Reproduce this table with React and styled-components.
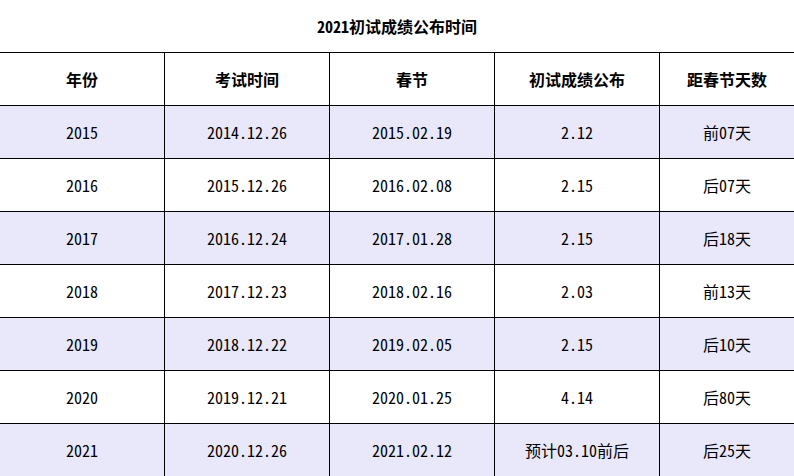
import React from 'react';
import styled, { createGlobalStyle } from 'styled-components';

const GlobalStyle = createGlobalStyle`
    html, body {
        margin: 0;
        padding: 0;
        background: #fff;
    }
    body {
        font-family: "Noto Sans Mono CJK SC", "Noto Sans CJK SC", "Liberation Mono", monospace;
        color: #000;
    }
`;

const Page = styled.div`
    width: 794px;
    height: 476px;
    overflow: hidden;
`;

const Title = styled.h2`
    margin: 0;
    height: 52px;
    display: flex;
    align-items: center;
    justify-content: center;
    font-size: 16px;
    font-weight: bold;
`;

const Row = styled.div`
    display: grid;
    grid-template-columns: 164px 165px 165px 165px 1fr;
    height: 53px;
    box-sizing: border-box;
    border-top: 1px solid #000;
    background: ${({ shaded }) => (shaded ? '#e8e8fa' : '#fff')};
`;

const Cell = styled.div`
    display: flex;
    align-items: center;
    justify-content: center;
    font-size: 16px;
    font-weight: ${({ head }) => (head ? 'bold' : 'normal')};
    border-left: 1px solid #000;
    box-sizing: border-box;

    &:first-child {
        border-left: none;
    }
`;

const headers = ['年份', '考试时间', '春节', '初试成绩公布', '距春节天数'];

const rows = [
    ['2015', '2014.12.26', '2015.02.19', '2.12', '前07天'],
    ['2016', '2015.12.26', '2016.02.08', '2.15', '后07天'],
    ['2017', '2016.12.24', '2017.01.28', '2.15', '后18天'],
    ['2018', '2017.12.23', '2018.02.16', '2.03', '前13天'],
    ['2019', '2018.12.22', '2019.02.05', '2.15', '后10天'],
    ['2020', '2019.12.21', '2020.01.25', '4.14', '后80天'],
    ['2021', '2020.12.26', '2021.02.12', '预计03.10前后', '后25天'],
];

const App = () => (
    <Page>
        <GlobalStyle />
        <Title>2021初试成绩公布时间</Title>
        <Row>
            {headers.map((h) => (
                <Cell head key={h}>{h}</Cell>
            ))}
        </Row>
        {rows.map((r, i) => (
            <Row shaded={i % 2 === 0} key={r[0]}>
                {r.map((v, j) => (
                    <Cell key={j}>{v}</Cell>
                ))}
            </Row>
        ))}
    </Page>
);

export default App;
